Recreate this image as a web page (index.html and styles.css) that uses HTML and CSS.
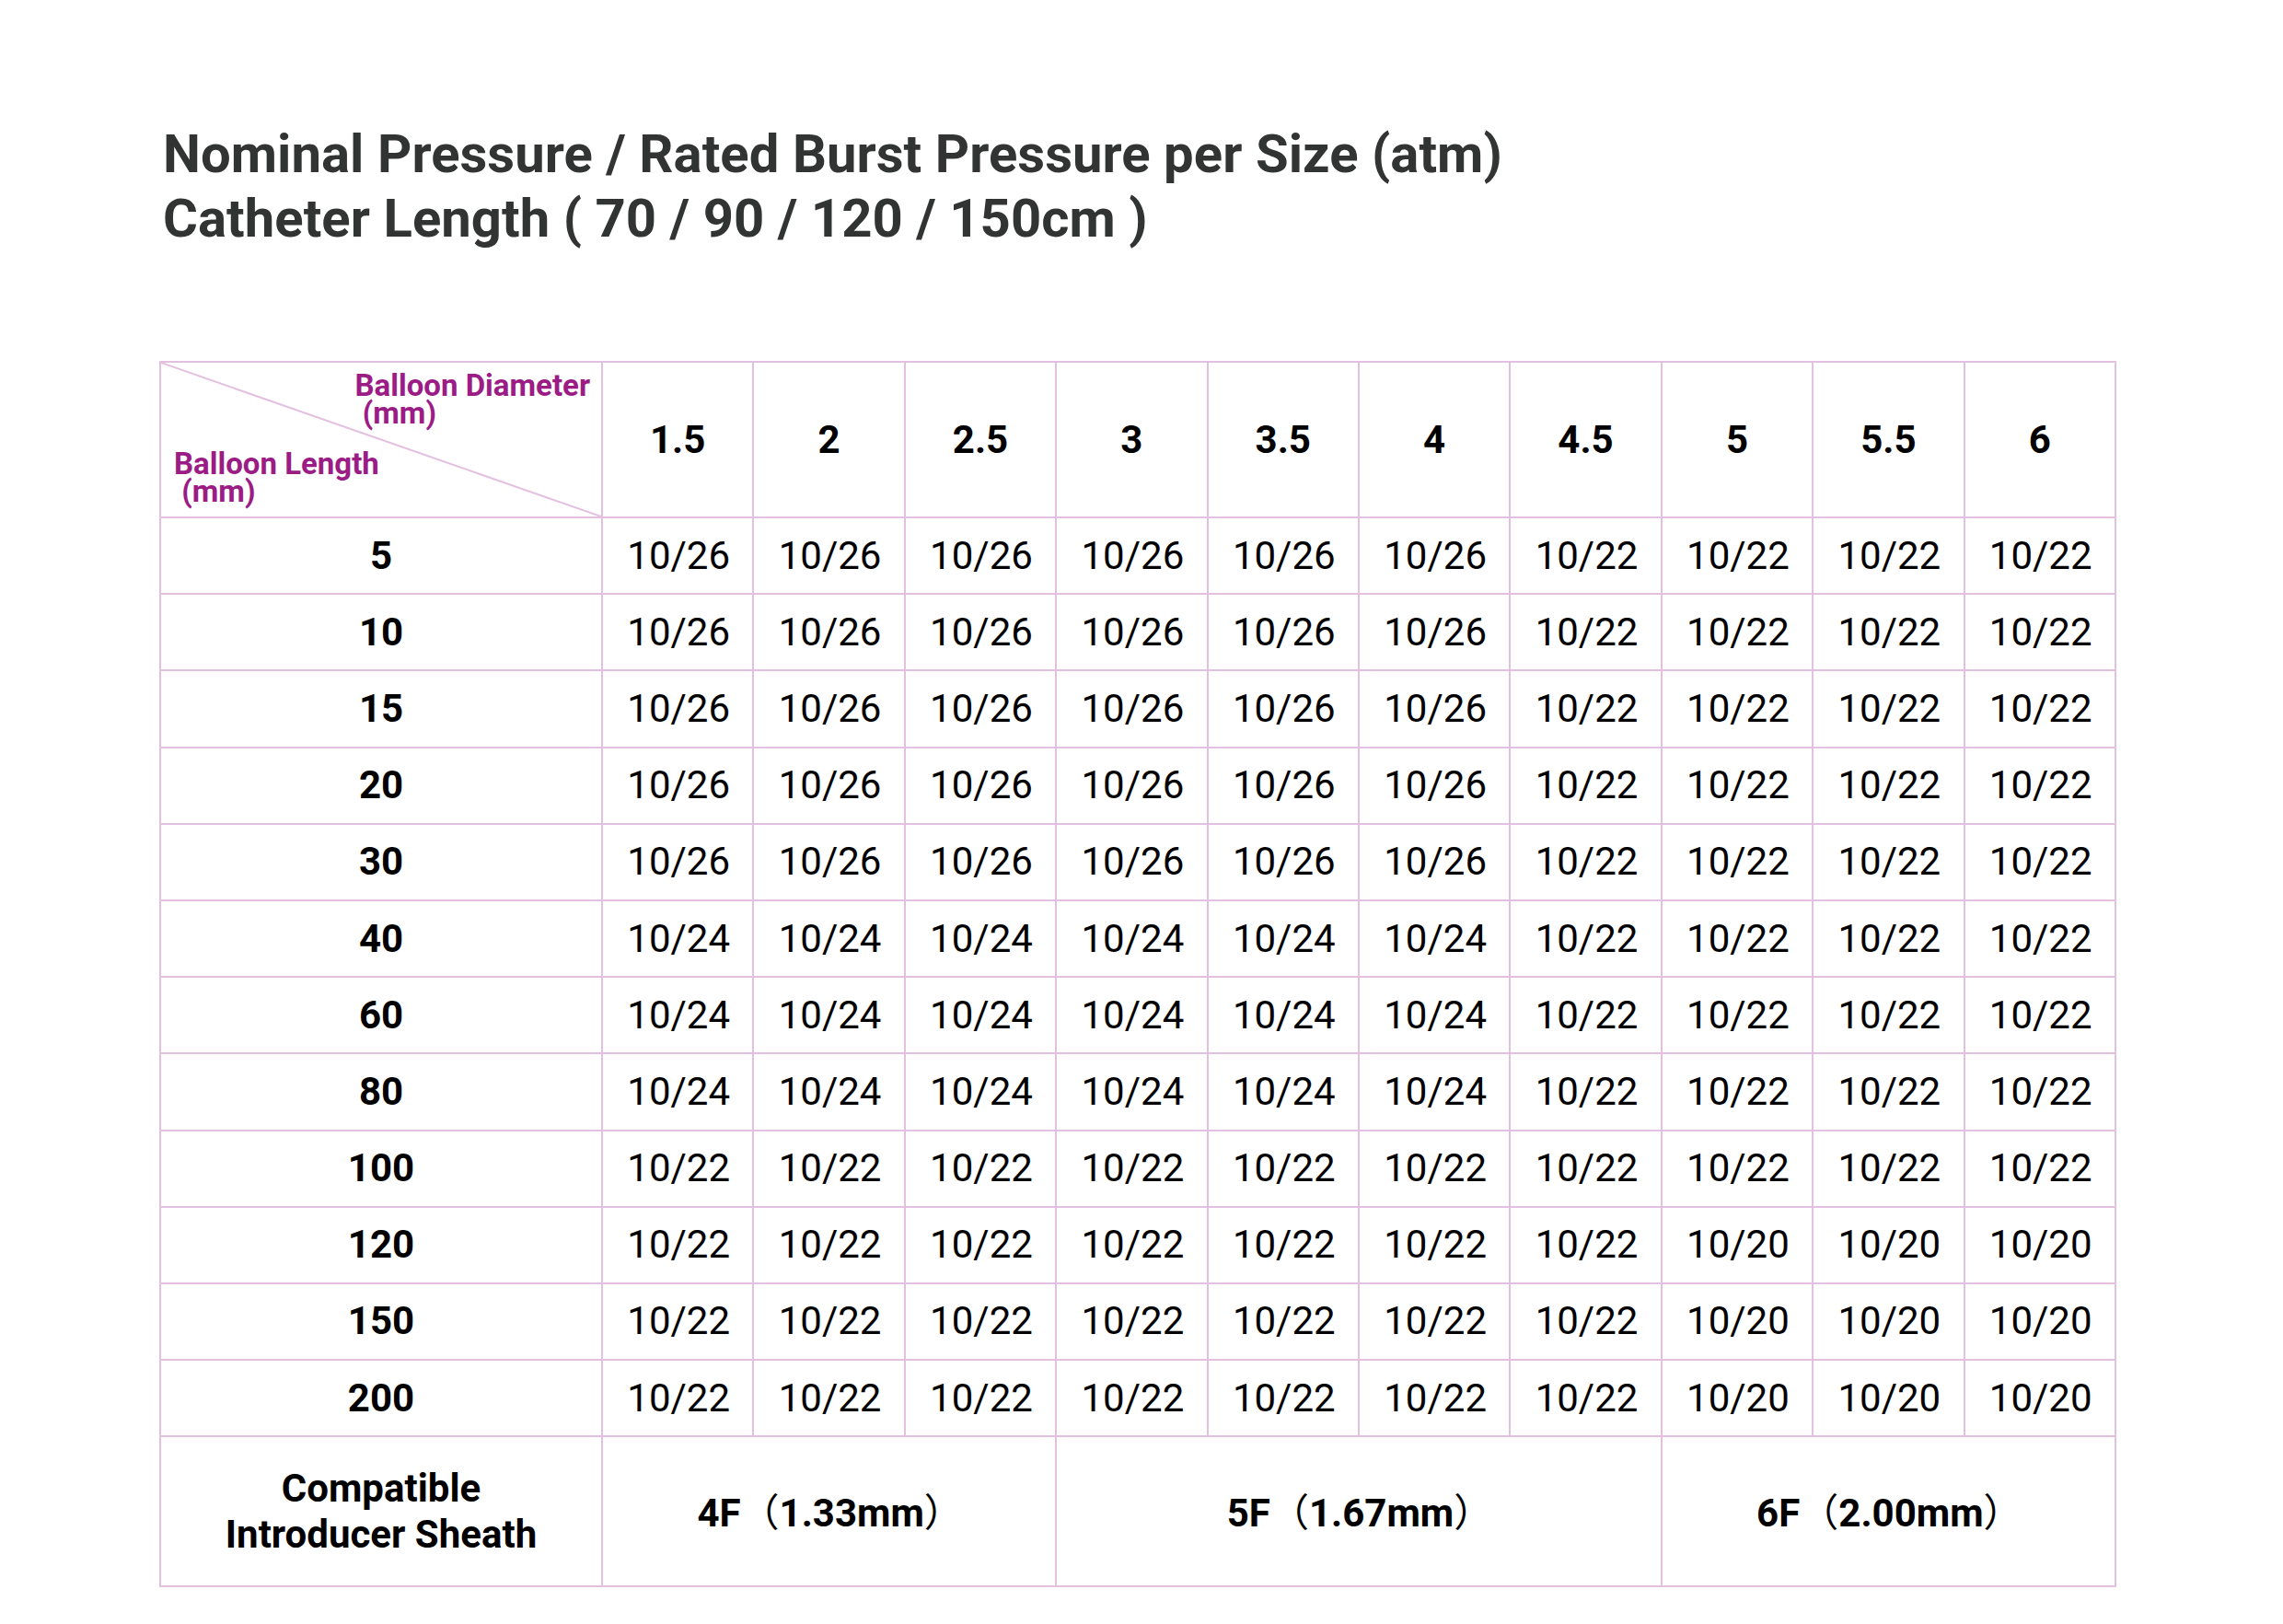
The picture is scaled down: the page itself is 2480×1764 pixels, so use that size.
FILE: index.html
```html
<!DOCTYPE html>
<html lang="en">
<head>
<meta charset="utf-8">
<title>Nominal Pressure / Rated Burst Pressure per Size</title>
<link rel="stylesheet" href="styles.css">
</head>
<body>
<main class="page">
  <h1 class="title">Nominal Pressure / Rated Burst Pressure per Size (atm)<br>Catheter Length ( 70 / 90 / 120 / 150cm )</h1>
  <table class="spec">
    <colgroup>
      <col class="col-first">
      <col class="col-num"><col class="col-num"><col class="col-num"><col class="col-num"><col class="col-num">
      <col class="col-num"><col class="col-num"><col class="col-num"><col class="col-num"><col class="col-num">
    </colgroup>
    <thead>
      <tr class="row-head">
        <th class="corner">
          <svg class="diag" viewBox="0 0 100 100" preserveAspectRatio="none" aria-hidden="true"><line x1="0" y1="0" x2="100" y2="100" vector-effect="non-scaling-stroke"/></svg>
          <div class="corner-inner">
            <span class="lbl lbl-dia"><span class="lbl-line">Balloon Diameter</span><span class="lbl-line">&nbsp;(mm)</span></span>
            <span class="lbl lbl-len"><span class="lbl-line">Balloon Length</span><span class="lbl-line">&nbsp;(mm)</span></span>
          </div>
        </th>
        <th>1.5</th><th>2</th><th>2.5</th><th>3</th><th>3.5</th><th>4</th><th>4.5</th><th>5</th><th>5.5</th><th>6</th>
      </tr>
    </thead>
    <tbody>
      <tr><th>5</th><td>10/26</td><td>10/26</td><td>10/26</td><td>10/26</td><td>10/26</td><td>10/26</td><td>10/22</td><td>10/22</td><td>10/22</td><td>10/22</td></tr>
      <tr><th>10</th><td>10/26</td><td>10/26</td><td>10/26</td><td>10/26</td><td>10/26</td><td>10/26</td><td>10/22</td><td>10/22</td><td>10/22</td><td>10/22</td></tr>
      <tr><th>15</th><td>10/26</td><td>10/26</td><td>10/26</td><td>10/26</td><td>10/26</td><td>10/26</td><td>10/22</td><td>10/22</td><td>10/22</td><td>10/22</td></tr>
      <tr><th>20</th><td>10/26</td><td>10/26</td><td>10/26</td><td>10/26</td><td>10/26</td><td>10/26</td><td>10/22</td><td>10/22</td><td>10/22</td><td>10/22</td></tr>
      <tr><th>30</th><td>10/26</td><td>10/26</td><td>10/26</td><td>10/26</td><td>10/26</td><td>10/26</td><td>10/22</td><td>10/22</td><td>10/22</td><td>10/22</td></tr>
      <tr><th>40</th><td>10/24</td><td>10/24</td><td>10/24</td><td>10/24</td><td>10/24</td><td>10/24</td><td>10/22</td><td>10/22</td><td>10/22</td><td>10/22</td></tr>
      <tr><th>60</th><td>10/24</td><td>10/24</td><td>10/24</td><td>10/24</td><td>10/24</td><td>10/24</td><td>10/22</td><td>10/22</td><td>10/22</td><td>10/22</td></tr>
      <tr><th>80</th><td>10/24</td><td>10/24</td><td>10/24</td><td>10/24</td><td>10/24</td><td>10/24</td><td>10/22</td><td>10/22</td><td>10/22</td><td>10/22</td></tr>
      <tr><th>100</th><td>10/22</td><td>10/22</td><td>10/22</td><td>10/22</td><td>10/22</td><td>10/22</td><td>10/22</td><td>10/22</td><td>10/22</td><td>10/22</td></tr>
      <tr><th>120</th><td>10/22</td><td>10/22</td><td>10/22</td><td>10/22</td><td>10/22</td><td>10/22</td><td>10/22</td><td>10/20</td><td>10/20</td><td>10/20</td></tr>
      <tr><th>150</th><td>10/22</td><td>10/22</td><td>10/22</td><td>10/22</td><td>10/22</td><td>10/22</td><td>10/22</td><td>10/20</td><td>10/20</td><td>10/20</td></tr>
      <tr><th>200</th><td>10/22</td><td>10/22</td><td>10/22</td><td>10/22</td><td>10/22</td><td>10/22</td><td>10/22</td><td>10/20</td><td>10/20</td><td>10/20</td></tr>
    </tbody>
    <tfoot>
      <tr class="row-foot">
        <th class="foot-label">Compatible<br>Introducer Sheath</th>
        <td colspan="3">4F<span class="paren">（</span>1.33mm<span class="paren">）</span></td>
        <td colspan="4">5F<span class="paren">（</span>1.67mm<span class="paren">）</span></td>
        <td colspan="3">6F<span class="paren">（</span>2.00mm<span class="paren">）</span></td>
      </tr>
    </tfoot>
  </table>
</main>
</body>
</html>
```
FILE: styles.css
```css
html, body {
  margin: 0;
  padding: 0;
  background: #ffffff;
}

.page {
  padding: 132px 0 0 173px;
  font-family: Roboto, "Noto Sans CJK SC", sans-serif;
}

.title {
  margin: 0 0 120px 4px;
  font-size: 58px;
  line-height: 70px;
  font-weight: 700;
  color: #323433;
  letter-spacing: 0.05px;
}

.spec {
  border-collapse: collapse;
  table-layout: fixed;
  width: 2124px;
  color: #000000;
}

.col-first { width: 480px; }
.col-num { width: 164.4px; }

.spec th,
.spec td {
  border: 2px solid #e4c0e0;
  padding: 0;
  text-align: center;
  vertical-align: middle;
  font-size: 42px;
  line-height: 50px;
}

.spec th { font-weight: 700; }
.spec td { font-weight: 400; padding-left: 2px; }

.spec tbody tr { height: 83.2px; }
.row-head { height: 168px; }
.row-foot { height: 162.7px; }

.spec tfoot th,
.spec tfoot td {
  font-size: 42px;
  line-height: 50px;
  font-weight: 700;
}

.paren {
  font-family: "Noto Sans CJK SC", sans-serif;
  font-weight: 400;
}

.corner {
  position: relative;
  padding: 0;
}

.diag {
  position: absolute;
  left: 0;
  top: 0;
  width: 100%;
  height: 100%;
}

.diag line {
  stroke: #e4c0e0;
  stroke-width: 2;
}

.corner-inner {
  position: relative;
  display: flex;
  flex-direction: column;
  justify-content: space-between;
  height: 167px;
  box-sizing: border-box;
  padding: 10px 12px 12px 14px;
}

.lbl {
  display: flex;
  flex-direction: column;
  text-align: left;
  color: #9c1c86;
  font-size: 33px;
  font-weight: 700;
}

.lbl-line {
  display: block;
  height: 30px;
  line-height: 30px;
  white-space: nowrap;
}

.lbl-dia { align-self: flex-end; }
.lbl-len { align-self: flex-start; }
```
